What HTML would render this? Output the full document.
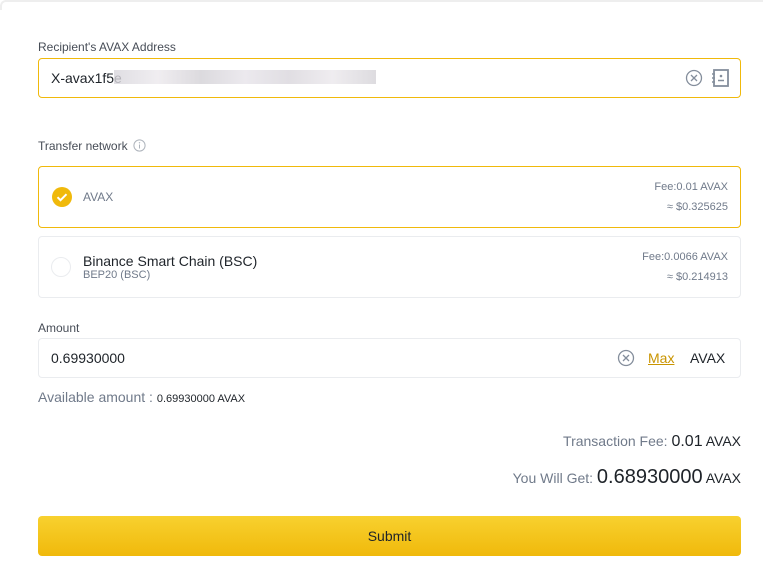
<!DOCTYPE html>
<html><head><style>
*{margin:0;padding:0;box-sizing:border-box}
body{width:763px;height:570px;background:#fff;font-family:"Liberation Sans",sans-serif;color:#1e2329;position:relative;overflow:hidden}
.top{position:absolute;left:0;top:0;width:763px;height:10px;border-top:2px solid #eeeeee;border-left:2px solid #eeeeee;border-top-left-radius:6px}
.a{position:absolute}
.lbl{font-size:12px;color:#474d57}
.box{position:absolute;left:38px;width:703px;border:1px solid #eaecef;border-radius:4px}
.sel{border-color:#f0b90b}
.r{text-align:right;font-size:11px;color:#707a8a;right:12px;position:absolute;line-height:20px}
</style></head><body>
<div class="top"></div>
<div class="a lbl" style="left:38px;top:40px">Recipient's AVAX Address</div>
<div class="box sel" style="top:58px;height:40px"></div>
<div class="a" style="left:51px;top:70px;font-size:14px">X-avax1f5e</div>
<div class="a" style="left:114px;top:70px;width:262px;height:14px;background:linear-gradient(90deg,#d8d6dc,#ece9ed,#d3d1d6,#e7e4ea,#d9d6dc,#ebe8ec,#d5d3d8);opacity:.8"></div>
<svg class="a" style="left:685px;top:69px" width="18" height="18" viewBox="0 0 18 18"><circle cx="9" cy="9" r="7.5" fill="none" stroke="#848e9c" stroke-width="1.3"/><path d="M6 6l6 6M12 6l-6 6" stroke="#848e9c" stroke-width="1.3"/></svg>
<svg class="a" style="left:711px;top:68px" width="20" height="20" viewBox="0 0 20 20"><rect x="3" y="2" width="14" height="16" fill="none" stroke="#848e9c" stroke-width="1.8"/><path d="M1 6h3M1 10h3M1 14h3" stroke="#848e9c" stroke-width="1.5"/><circle cx="10" cy="8" r="1.3" fill="#848e9c"/><path d="M7 12.5h6" stroke="#848e9c" stroke-width="1.5"/></svg>

<div class="a lbl" style="left:38px;top:139px">Transfer network</div>
<svg class="a" style="left:133px;top:139px" width="13" height="13" viewBox="0 0 13 13"><circle cx="6.5" cy="6.5" r="5.6" fill="none" stroke="#aeb4bc"/><path d="M6.5 5.5v4" stroke="#aeb4bc"/><circle cx="6.5" cy="3.8" r=".7" fill="#aeb4bc"/></svg>

<div class="box sel" style="top:166px;height:62px"><div class="r" style="top:10px">Fee:0.01 AVAX<br>≈ $0.325625</div></div>
<svg class="a" style="left:52px;top:187px" width="20" height="20" viewBox="0 0 20 20"><circle cx="10" cy="10" r="10" fill="#f0b90b"/><path d="M5.5 10.2l3 3 6-6" fill="none" stroke="#fff" stroke-width="2"/></svg>
<div class="a" style="left:83px;top:190px;font-size:12px;color:#707a8a">AVAX</div>

<div class="box" style="top:236px;height:62px"><div class="r" style="top:10px">Fee:0.0066 AVAX<br>≈ $0.214913</div></div>
<div class="a" style="left:51px;top:257px;width:20px;height:20px;border:1px solid #eaecef;border-radius:50%"></div>
<div class="a" style="left:83px;top:253px;font-size:14px;color:#1e2329">Binance Smart Chain (BSC)</div>
<div class="a" style="left:83px;top:269px;font-size:11px;color:#707a8a">BEP20 (BSC)</div>

<div class="a lbl" style="left:38px;top:321px">Amount</div>
<div class="box" style="top:338px;height:40px"></div>
<div class="a" style="left:51px;top:350px;font-size:14px">0.69930000</div>
<svg class="a" style="left:617px;top:349px" width="18" height="18" viewBox="0 0 18 18"><circle cx="9" cy="9" r="7.5" fill="none" stroke="#848e9c" stroke-width="1.3"/><path d="M6 6l6 6M12 6l-6 6" stroke="#848e9c" stroke-width="1.3"/></svg>
<div class="a" style="left:648px;top:350px;font-size:14px;color:#c99400;text-decoration:underline">Max</div>
<div class="a" style="left:690px;top:350px;font-size:14px">AVAX</div>

<div class="a" style="left:38px;top:389px;font-size:14px;color:#707a8a">Available amount : <span style="font-size:11px;color:#1e2329">0.69930000 AVAX</span></div>

<div class="a" style="right:22px;top:433px;font-size:14px;color:#707a8a;white-space:nowrap">Transaction Fee: <span style="font-size:16px;color:#1e2329">0.01</span> <span style="color:#1e2329;font-size:14px">AVAX</span></div>
<div class="a" style="right:22px;top:466px;font-size:14px;color:#707a8a;white-space:nowrap">You Will Get: <span style="font-size:20px;color:#1e2329">0.68930000</span> <span style="color:#1e2329;font-size:14px">AVAX</span></div>

<div class="a" style="left:38px;top:516px;width:703px;height:40px;border-radius:4px;background:linear-gradient(180deg,#f8d12f,#f0b90b);text-align:center;line-height:40px;font-size:14px;color:#1e2329">Submit</div>
</body></html>
